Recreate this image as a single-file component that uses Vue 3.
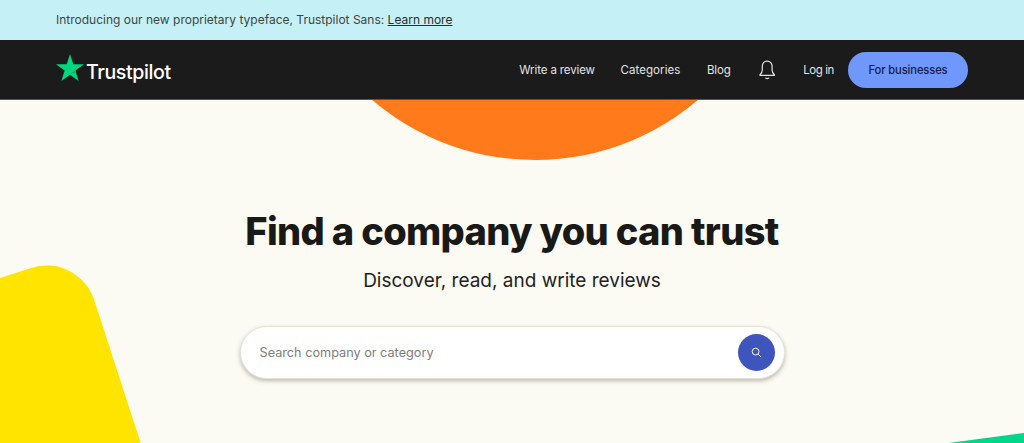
<template>
  <div class="page">
    <div class="banner">
      <p>Introducing our new proprietary typeface, Trustpilot Sans: <a href="#">Learn more</a></p>
    </div>

    <header class="nav">
      <a class="logo" href="#">
        <svg class="logo-star" viewBox="0 0 28 27" width="28" height="27">
          <path fill="#00d67f" d="M14 0l3.3 10.2H28l-8.650 6.300L22.650 27 14 20.700 5.350 27l3.300-10.500L0 10.200h10.700z" />
          <path fill="#00a865" d="M19.800 18.200l-.6-1.900L14 20.700z" />
        </svg>
        <span class="logo-text">Trustpilot</span>
      </a>
      <nav class="links">
        <a class="write" href="#">Write a review</a>
        <a class="cats" href="#">Categories</a>
        <a href="#">Blog</a>
        <svg class="bell" viewBox="0 0 18 22" width="16.400" height="20" fill="none" stroke="#e6e6e6" stroke-width="1.300">
          <path d="M9 1.200c-3.300 0-5.400 2.500-5.400 5.800v4.300c0 2-1.100 3.600-2.500 4.900v.7h15.800v-.7c-1.400-1.300-2.500-2.900-2.500-4.900V7c0-3.300-2.100-5.800-5.400-5.800z" />
          <path d="M7 19.600c.4 1.100 3.600 1.100 4 0" />
        </svg>
        <a class="login" href="#">Log in</a>
        <a class="biz" href="#">For businesses</a>
      </nav>
    </header>

    <main class="hero">
      <div class="shape orange"></div>
      <div class="shape yellow"></div>
      <div class="shape green"></div>

      <h1>Find a company you can trust</h1>
      <p class="sub">Discover, read, and write reviews</p>
      <form class="search" @submit.prevent>
        <span class="placeholder">Search company or category</span>
        <button type="button" aria-label="Search">
          <svg viewBox="0 0 12 12" width="11" height="11" fill="none" stroke="#fff" stroke-width="1">
            <circle cx="5" cy="5" r="3.700" />
            <path d="M7.700 7.700L11 11" />
          </svg>
        </button>
      </form>
    </main>
  </div>
</template>

<script setup>
</script>

<style>
html, body {
  margin: 0;
}
</style>

<style scoped>
.page {
  width: 1024px;
  height: 443px;
  overflow: hidden;
  display: flex;
  flex-direction: column;
  font-family: Inter, "Liberation Sans", sans-serif;
}

.banner {
  height: 40px;
  flex: none;
  background: #c5f1f6;
  display: flex;
  align-items: center;
  padding: 0 56px;
  box-sizing: border-box;
}

.banner p {
  margin: 0 0 2px;
  font-size: 12px;
  color: #3f4442;
}

.banner a {
  color: #2b2e2d;
}

.nav {
  height: 60px;
  flex: none;
  box-sizing: border-box;
  background: #1b1b1b;
  border-bottom: 1px solid #555;
  display: flex;
  align-items: center;
  justify-content: space-between;
  padding: 0 56px;
  position: relative;
  z-index: 1;
}

.logo {
  display: flex;
  align-items: flex-end;
  gap: 2px;
  color: #fff;
  text-decoration: none;
  font-size: 19.600px;
  font-weight: 500;
  letter-spacing: -0.4px;
}

.logo-star {
  margin-bottom: 5px;
}

.logo-text {
  margin-bottom: 2px;
}

.links {
  display: flex;
  align-items: center;
}

.links a {
  color: #e3e3e3;
  text-decoration: none;
  font-size: 11.500px;
  letter-spacing: -0.12px;
}

.links .write {
  margin-right: 25.500px;
}

.links .cats {
  margin-right: 26.500px;
  letter-spacing: 0.08px;
}

.links .login {
  letter-spacing: -0.4px;
}

.bell {
  margin: 0 28px;
}

.links .biz {
  margin-left: 14px;
  width: 120px;
  height: 36px;
  border-radius: 18px;
  background: #7097fb;
  color: #15204a;
  font-weight: 500;
  font-size: 11.200px;
  display: flex;
  align-items: center;
  justify-content: center;
}

.hero {
  flex: 1;
  position: relative;
  overflow: hidden;
  background: #fcfbf3;
  display: flex;
  flex-direction: column;
  align-items: center;
  padding-top: 107px;
  box-sizing: border-box;
}

.hero > * {
  flex: none;
}

.shape {
  position: absolute;
}

.orange {
  width: 502px;
  height: 502px;
  border-radius: 50%;
  background: #ff7a1a;
  left: 284px;
  top: -442px;
}

.yellow {
  width: 200px;
  height: 300px;
  border-radius: 50px;
  background: #ffe400;
  left: -70px;
  top: 176px;
  transform: rotate(-18deg);
}

.green {
  width: 200px;
  height: 100px;
  background: #00d68a;
  left: 943px;
  top: 331px;
  transform: rotate(-7.500deg);
}

h1 {
  position: relative;
  margin: 0;
  font-size: 38px;
  line-height: 48px;
  font-weight: 800;
  letter-spacing: -0.65px;
  color: #191a17;
}

.sub {
  position: relative;
  margin: 12px 0 0;
  font-size: 19px;
  line-height: 28px;
  color: #222;
}

.search {
  position: relative;
  margin-top: 31px;
  width: 545px;
  height: 53px;
  box-sizing: border-box;
  border-radius: 27px;
  background: #fff;
  border: 1px solid #e6e3d8;
  box-shadow: 0 2px 4px rgba(70, 60, 40, 0.35);
  display: flex;
  align-items: center;
  justify-content: space-between;
  padding: 0 9px 0 19px;
}

.placeholder {
  font-size: 12.700px;
  color: #7d7d7d;
}

.search button {
  width: 37px;
  height: 37px;
  border: 0;
  border-radius: 50%;
  padding: 0;
  background: #3d55bd;
  display: flex;
  align-items: center;
  justify-content: center;
}
</style>
